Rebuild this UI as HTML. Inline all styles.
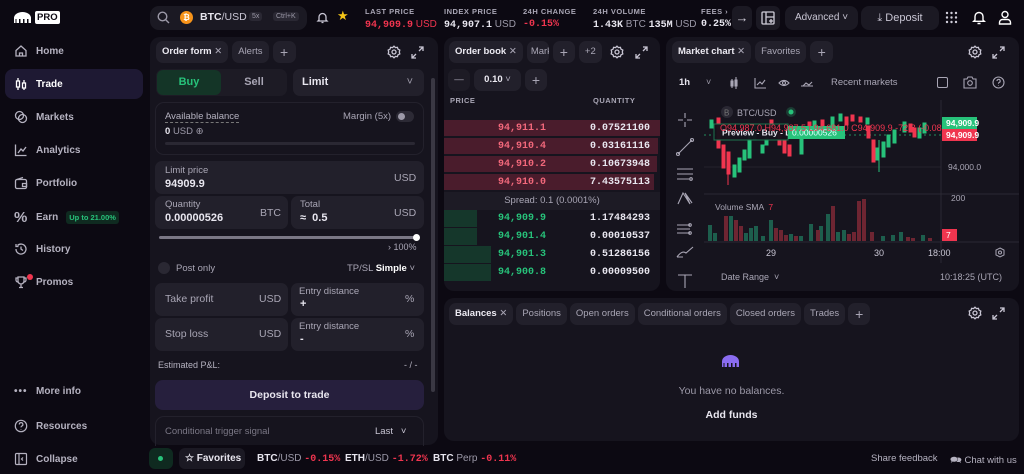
<!DOCTYPE html>
<html><head><meta charset="utf-8"><style>
*{box-sizing:border-box;margin:0;padding:0}
body{width:1024px;height:474px;background:#0c0912;font-family:"Liberation Sans",sans-serif;color:#e8e6ef;position:relative;overflow:hidden;font-size:11px}
.a{position:absolute}
.panel{position:absolute;background:#16141e;border-radius:10px}
.tabs{position:absolute;display:flex;gap:4px}
.tab{height:22px;background:#22202b;border-radius:7px;font-size:9.5px;color:#a9a6b5;line-height:22px;padding:0 6px;white-space:nowrap;text-align:center}
.tab b{color:#eceaf2}
.nav{position:absolute;left:14px;font-size:10px;color:#b5b2c0;font-weight:bold;display:flex;align-items:center;gap:8px}
.nav svg{width:14px;height:14px}
.lbl{font-size:7.5px;font-weight:bold;color:#a9a6b5;letter-spacing:.5px}
.mono{font-family:"Liberation Mono",monospace;font-weight:bold}
.box{position:absolute;background:#22202b;border-radius:7px}
.g{color:#9c99a8}
.ob{position:absolute;left:444px;width:216px;height:17px;font-family:"Liberation Mono",monospace;font-size:10px;font-weight:bold}
.ob span{position:absolute;top:3px}
</style></head><body>

<!-- sidebar -->
<div class="a" style="left:13px;top:11px;display:flex;align-items:center;gap:3px">
<svg width="19" height="13" viewBox="0 0 19 13"><path d="M1 12V7a8.5 6 0 0 1 17 0v5h-2.5V8h-1.5v4h-2.5V8H10v4H7.5V8H6v4H3.5V8H2.5v4z" fill="#fff"/></svg>
<span style="background:#fff;color:#0c0912;font-weight:bold;font-size:9.5px;padding:1px 2px;border-radius:2px">PRO</span></div>
<div class="a" style="left:5px;top:69px;width:138px;height:30px;background:#1e1933;border-radius:8px"></div>
<div class="nav" style="top:44px"><svg viewBox="0 0 14 14" fill="none" stroke="#b5b2c0" stroke-width="1.3"><path d="M2 6.5L7 2l5 4.5V12H2z"/><path d="M5.5 12V9h3v3"/></svg>Home</div>
<div class="nav" style="top:77px;color:#fff"><svg viewBox="0 0 14 14" fill="none" stroke="#fff" stroke-width="1.3"><rect x="2.5" y="4" width="3" height="6"/><rect x="8.5" y="6" width="3" height="5"/><path d="M4 1v3M4 10v3M10 3v3M10 11v2"/></svg>Trade</div>
<div class="nav" style="top:110px"><svg viewBox="0 0 14 14" fill="none" stroke="#b5b2c0" stroke-width="1.3"><circle cx="5.5" cy="5.5" r="4"/><circle cx="8.5" cy="8.5" r="4"/></svg>Markets</div>
<div class="nav" style="top:143px"><svg viewBox="0 0 14 14" fill="none" stroke="#b5b2c0" stroke-width="1.3"><path d="M1.5 1.5v11h11"/><path d="M4 10l3-4 2 2 3-4"/></svg>Analytics</div>
<div class="nav" style="top:176px"><svg viewBox="0 0 14 14" fill="none" stroke="#b5b2c0" stroke-width="1.3"><rect x="1.5" y="3.5" width="11" height="9" rx="1.5"/><path d="M3 3.5l6-2M8.5 7.5h4v3h-4z"/></svg>Portfolio</div>
<div class="nav" style="top:209px"><span style="font-size:15px;color:#b5b2c0;width:14px">%</span>Earn<span style="background:#0f2a20;color:#27c27a;font-size:7.5px;padding:2px 3px;border-radius:3px">Up to 21.00%</span></div>
<div class="nav" style="top:242px"><svg viewBox="0 0 14 14" fill="none" stroke="#b5b2c0" stroke-width="1.3"><path d="M2 7a5 5 0 1 0 1.5-3.5M2 2v2.5h2.5"/><path d="M7 4.5V7l2 1.5"/></svg>History</div>
<div class="nav" style="top:275px"><svg viewBox="0 0 14 14" fill="none" stroke="#b5b2c0" stroke-width="1.3"><path d="M4 2h6v4a3 3 0 0 1-6 0zM4 3H2v2a2 2 0 0 0 2 2M10 3h2v2a2 2 0 0 1-2 2M7 9v3M5 12.5h4"/></svg>Promos</div>
<div class="a" style="left:27px;top:274px;width:6px;height:6px;border-radius:50%;background:#f0354f"></div>
<div class="nav" style="top:386px"><span style="width:14px;letter-spacing:1px;color:#b5b2c0">•••</span>More info</div>
<div class="nav" style="top:419px"><svg viewBox="0 0 14 14" fill="none" stroke="#b5b2c0" stroke-width="1.2"><circle cx="7" cy="7" r="5.7"/><path d="M5.3 5.5a1.8 1.8 0 1 1 2.4 1.6c-.6.3-.7.7-.7 1.3M7 10v.5"/></svg>Resources</div>
<div class="nav" style="top:452px"><svg viewBox="0 0 14 14" fill="none" stroke="#b5b2c0" stroke-width="1.2"><rect x="1.5" y="1.5" width="11" height="11" rx="1"/><path d="M5 1.5v11M9 5.5L7.5 7 9 8.5"/></svg>Collapse</div>

<!-- top bar -->
<div class="a" style="left:150px;top:6px;width:157px;height:24px;background:#1b1923;border-radius:9px"></div>
<svg class="a" style="left:157px;top:11px" width="13" height="13" fill="none" stroke="#9c99a8" stroke-width="1.4"><circle cx="5.5" cy="5.5" r="4.3"/><path d="M8.7 8.7L12 12"/></svg>
<div class="a" style="left:180px;top:11px;width:13px;height:13px;border-radius:50%;background:#f7931a;color:#fff;font-size:8px;font-weight:bold;text-align:center;line-height:13px">₿</div>
<div class="a" style="left:200px;top:11px;font-size:10.5px;font-weight:bold">BTC<span style="color:#c9c6d4;font-weight:normal">/USD</span></div>
<div class="a" style="left:249px;top:12px;font-size:7px;background:#2a2833;color:#9c99a8;padding:1px 3px;border-radius:3px">5x</div>
<div class="a" style="left:273px;top:12px;font-size:7px;background:#2a2833;color:#9c99a8;padding:1px 3px;border-radius:3px">Ctrl+K</div>
<svg class="a" style="left:316px;top:11px" width="13" height="13" fill="none" stroke="#c9c6d4" stroke-width="1.3"><path d="M3 9V6a3.5 3.5 0 0 1 7 0v3l1 1H2zM5.5 11.5h2"/></svg>
<div class="a" style="left:337px;top:8px;color:#f5c518;font-size:13px">★</div>
<div class="a lbl" style="left:365px;top:7px">LAST PRICE</div>
<div class="a" style="left:365px;top:19px;font-size:10px;color:#f0354f"><span class="mono">94,909.9</span> USD</div>
<div class="a lbl" style="left:444px;top:7px">INDEX PRICE</div>
<div class="a" style="left:444px;top:19px;font-size:10px"><span class="mono">94,907.1</span> <span class="g">USD</span></div>
<div class="a lbl" style="left:523px;top:7px">24H CHANGE</div>
<div class="a mono" style="left:523px;top:19px;font-size:10px;color:#f0354f">-0.15%</div>
<div class="a lbl" style="left:593px;top:7px">24H VOLUME</div>
<div class="a" style="left:593px;top:19px;font-size:10px"><span class="mono">1.43K</span> <span class="g">BTC</span> <span class="mono">135M</span> <span class="g">USD</span></div>
<div class="a lbl" style="left:701px;top:7px">FEES ›</div>
<div class="a mono" style="left:701px;top:19px;font-size:10px">0.25%</div>
<div class="a" style="left:732px;top:6px;width:20px;height:24px;background:#1b1923;border-radius:6px;color:#d0cdd9;text-align:center;line-height:24px;font-size:13px">→</div>
<div class="a" style="left:756px;top:6px;width:24px;height:24px;background:#1b1923;border-radius:6px"></div>
<svg class="a" style="left:761px;top:11px" width="14" height="14" fill="none" stroke="#d0cdd9" stroke-width="1.3"><rect x="1" y="1" width="12" height="12" rx="1"/><path d="M5 1v12M5 6h8M10 8v4M8 10h4"/></svg>
<div class="a" style="left:785px;top:6px;width:73px;height:24px;background:#1b1923;border-radius:8px;color:#c9c6d4;font-size:10px;line-height:24px;text-align:center">Advanced ˅</div>
<div class="a" style="left:861px;top:6px;width:78px;height:24px;background:#1b1923;border-radius:8px;color:#c9c6d4;font-size:11px;line-height:24px;text-align:center">⤓ Deposit</div>
<svg class="a" style="left:945px;top:11px" width="13" height="13" fill="#d0cdd9"><circle cx="2" cy="2" r="1.2"/><circle cx="6.5" cy="2" r="1.2"/><circle cx="11" cy="2" r="1.2"/><circle cx="2" cy="6.5" r="1.2"/><circle cx="6.5" cy="6.5" r="1.2"/><circle cx="11" cy="6.5" r="1.2"/><circle cx="2" cy="11" r="1.2"/><circle cx="6.5" cy="11" r="1.2"/><circle cx="11" cy="11" r="1.2"/></svg>
<svg class="a" style="left:972px;top:10px" width="14" height="15" fill="none" stroke="#fff" stroke-width="1.4"><path d="M3 10V6.5a4 4 0 0 1 8 0V10l1.3 1.3H1.7zM5.5 13.5h3"/></svg>
<svg class="a" style="left:998px;top:10px" width="14" height="15" fill="none" stroke="#fff" stroke-width="1.4"><circle cx="7" cy="4.5" r="3"/><path d="M1.5 14v-1.5a3 3 0 0 1 3-3h5a3 3 0 0 1 3 3V14z"/></svg>

<!-- order form panel -->
<div class="panel" style="left:150px;top:37px;width:288px;height:408px"></div>
<div class="tabs" style="left:156px;top:41px"><div class="tab"><b>Order form</b> ✕</div><div class="tab">Alerts</div><div class="tab" style="width:23px;font-size:14px">+</div></div>
<svg class="a" style="left:387px;top:45px" width="14" height="14" fill="none" stroke="#c9c6d4" stroke-width="1.3"><circle cx="7" cy="7" r="2"/><path d="M7 1.2l1.4 1.4 2 -.3.6 1.9 1.8.9-.5 1.9.5 1.9-1.8.9-.6 1.9-2-.3L7 12.8l-1.4-1.4-2 .3-.6-1.9-1.8-.9.5-1.9-.5-1.9 1.8-.9.6-1.9 2 .3z"/></svg>
<svg class="a" style="left:411px;top:46px" width="13" height="13" fill="none" stroke="#c9c6d4" stroke-width="1.3"><path d="M8 1h4v4M12 1L8 5M5 12H1V8M1 12l4-4"/></svg>
<div class="box" style="left:156px;top:69px;width:131px;height:27px;background:#1d1b25"></div>
<div class="a" style="left:157px;top:70px;width:64px;height:25px;background:#143527;border-radius:6px;color:#27c27a;font-size:11px;font-weight:bold;text-align:center;line-height:25px">Buy</div>
<div class="a" style="left:223px;top:70px;width:62px;height:25px;color:#a9a6b5;font-size:11px;font-weight:bold;text-align:center;line-height:25px">Sell</div>
<div class="box" style="left:293px;top:69px;width:131px;height:27px;font-size:11px;font-weight:bold;line-height:27px;padding-left:9px">Limit<span class="g" style="position:absolute;right:11px;font-weight:normal">˅</span></div>
<div class="a" style="left:155px;top:102px;width:269px;height:53px;border:1px solid #23212c;border-radius:9px"></div>
<div class="a" style="left:165px;top:111px;font-size:9.5px;color:#b5b2c0;border-bottom:1px dashed #777">Available balance</div>
<div class="a" style="left:165px;top:126px;font-size:9.5px"><b>0</b> <span class="g">USD ⊕</span></div>
<div class="a" style="left:343px;top:111px;font-size:9.5px;color:#a9a6b5">Margin (5x)</div>
<div class="a" style="left:396px;top:111px;width:18px;height:11px;border-radius:6px;background:#2c2a35"><div style="margin:2px;width:7px;height:7px;border-radius:50%;background:#9c99a8"></div></div>
<div class="a" style="left:165px;top:142px;width:250px;height:3px;background:#2a2833;border-radius:2px"></div>
<div class="box" style="left:155px;top:161px;width:269px;height:33px"></div>
<div class="a" style="left:165px;top:165px;font-size:9.5px;color:#a9a6b5">Limit price</div>
<div class="a" style="left:165px;top:178px;font-size:11px;font-weight:bold">94909.9</div>
<div class="a" style="left:394px;top:172px;font-size:10.5px;color:#a9a6b5">USD</div>
<div class="box" style="left:155px;top:196px;width:133px;height:33px"></div>
<div class="box" style="left:291px;top:196px;width:133px;height:33px"></div>
<div class="a" style="left:165px;top:199px;font-size:9.5px;color:#a9a6b5">Quantity</div>
<div class="a" style="left:165px;top:212px;font-size:11px;font-weight:bold">0.00000526</div>
<div class="a" style="left:260px;top:207px;font-size:10.5px;color:#a9a6b5">BTC</div>
<div class="a" style="left:300px;top:199px;font-size:9.5px;color:#a9a6b5">Total</div>
<div class="a" style="left:300px;top:212px;font-size:11px;font-weight:bold">≈&nbsp; 0.5</div>
<div class="a" style="left:394px;top:207px;font-size:10.5px;color:#a9a6b5">USD</div>
<div class="a" style="left:159px;top:236px;width:258px;height:3px;background:#7a7785;border-radius:2px"></div>
<div class="a" style="left:413px;top:234px;width:7px;height:7px;border-radius:50%;background:#fff"></div>
<div class="a" style="left:388px;top:242px;font-size:9px;color:#a9a6b5">› 100%</div>
<div class="a" style="left:158px;top:262px;width:12px;height:12px;border-radius:50%;background:#2a2833"></div>
<div class="a" style="left:176px;top:263px;font-size:9.5px;color:#a9a6b5">Post only</div>
<div class="a" style="left:347px;top:263px;font-size:9.5px;color:#a9a6b5">TP/SL <b style="color:#fff">Simple</b> ˅</div>
<div class="box" style="left:155px;top:283px;width:133px;height:33px"></div>
<div class="box" style="left:291px;top:283px;width:133px;height:33px"></div>
<div class="box" style="left:155px;top:318px;width:133px;height:33px"></div>
<div class="box" style="left:291px;top:318px;width:133px;height:33px"></div>
<div class="a" style="left:165px;top:293px;font-size:10.5px;color:#a9a6b5">Take profit</div>
<div class="a" style="left:259px;top:293px;font-size:10.5px;color:#a9a6b5">USD</div>
<div class="a" style="left:299px;top:286px;font-size:9.5px;color:#a9a6b5">Entry distance</div>
<div class="a" style="left:300px;top:298px;font-size:11px;font-weight:bold">+</div>
<div class="a" style="left:405px;top:293px;font-size:10.5px;color:#a9a6b5">%</div>
<div class="a" style="left:165px;top:328px;font-size:10.5px;color:#a9a6b5">Stop loss</div>
<div class="a" style="left:259px;top:328px;font-size:10.5px;color:#a9a6b5">USD</div>
<div class="a" style="left:299px;top:321px;font-size:9.5px;color:#a9a6b5">Entry distance</div>
<div class="a" style="left:300px;top:333px;font-size:11px;font-weight:bold">-</div>
<div class="a" style="left:405px;top:328px;font-size:10.5px;color:#a9a6b5">%</div>
<div class="a" style="left:158px;top:360px;font-size:9px;color:#b5b2c0">Estimated P&amp;L:</div>
<div class="a" style="left:404px;top:360px;font-size:9px;color:#b5b2c0">- / -</div>
<div class="a" style="left:155px;top:380px;width:269px;height:30px;background:#261f3d;border-radius:8px;text-align:center;line-height:30px;font-size:10.5px;font-weight:bold">Deposit to trade</div>
<div class="a" style="left:155px;top:416px;width:269px;height:30px;border:1px solid #23212c;border-bottom:none;border-radius:9px 9px 0 0"></div>
<div class="a" style="left:165px;top:426px;font-size:9.5px;color:#7a7785">Conditional trigger signal</div>
<div class="a" style="left:375px;top:426px;font-size:9.5px;color:#c9c6d4">Last&nbsp;&nbsp; ˅</div>
<div class="a" style="left:431px;top:78px;width:4px;height:314px;background:#3a3843;border-radius:2px"></div>

<!-- order book -->
<div class="panel" style="left:444px;top:37px;width:216px;height:254px"></div>
<div class="tabs" style="left:449px;top:41px"><div class="tab"><b>Order book</b> ✕</div><div class="tab" style="width:22px;overflow:hidden;padding:0 0 0 4px;text-align:left">Mark</div><div class="tab" style="width:22px;font-size:14px">+</div><div class="tab" style="width:23px">+2</div></div>
<svg class="a" style="left:610px;top:45px" width="14" height="14" fill="none" stroke="#c9c6d4" stroke-width="1.3"><circle cx="7" cy="7" r="2"/><path d="M7 1.2l1.4 1.4 2 -.3.6 1.9 1.8.9-.5 1.9.5 1.9-1.8.9-.6 1.9-2-.3L7 12.8l-1.4-1.4-2 .3-.6-1.9-1.8-.9.5-1.9-.5-1.9 1.8-.9.6-1.9 2 .3z"/></svg>
<svg class="a" style="left:635px;top:46px" width="13" height="13" fill="none" stroke="#c9c6d4" stroke-width="1.3"><path d="M8 1h4v4M12 1L8 5M5 12H1V8M1 12l4-4"/></svg>
<div class="tabs" style="left:448px;top:69px"><div class="tab" style="width:22px;background:#1d1b25">—</div><div class="tab" style="width:47px"><b>0.10</b> ˅</div><div class="tab" style="width:22px;font-size:14px">+</div></div>
<div class="a lbl" style="left:450px;top:96px">PRICE</div>
<div class="a lbl" style="left:593px;top:96px">QUANTITY</div>
<div class="a" style="left:444px;top:120px;width:216px;height:16px;background:#4a1c2c"></div>
<div class="a" style="left:444px;top:138px;width:214px;height:16px;background:#4a1c2c"></div>
<div class="a" style="left:444px;top:156px;width:213px;height:16px;background:#4a1c2c"></div>
<div class="a" style="left:444px;top:174px;width:210px;height:16px;background:#4a1c2c"></div>
<div class="a" style="left:444px;top:192px;width:216px;height:18px;background:#1d1b25;font-size:9.5px;color:#a9a6b5;text-align:center;line-height:18px">Spread: 0.1 (0.0001%)</div>
<div class="a" style="left:444px;top:210px;width:33px;height:17px;background:#15372b"></div>
<div class="a" style="left:444px;top:228px;width:33px;height:17px;background:#15372b"></div>
<div class="a" style="left:444px;top:246px;width:47px;height:17px;background:#15372b"></div>
<div class="a" style="left:444px;top:264px;width:47px;height:17px;background:#15372b"></div>
<div class="ob" style="top:120px"><span style="left:54px;color:#f2687b">94,911.1</span><span style="left:146px">0.07521100</span></div>
<div class="ob" style="top:138px"><span style="left:54px;color:#f2687b">94,910.4</span><span style="left:146px">0.03161116</span></div>
<div class="ob" style="top:156px"><span style="left:54px;color:#f2687b">94,910.2</span><span style="left:146px">0.10673948</span></div>
<div class="ob" style="top:174px"><span style="left:54px;color:#f2687b">94,910.0</span><span style="left:146px">7.43575113</span></div>
<div class="ob" style="top:210px"><span style="left:54px;color:#27c27a">94,909.9</span><span style="left:146px">1.17484293</span></div>
<div class="ob" style="top:228px"><span style="left:54px;color:#27c27a">94,901.4</span><span style="left:146px">0.00010537</span></div>
<div class="ob" style="top:246px"><span style="left:54px;color:#27c27a">94,901.3</span><span style="left:146px">0.51286156</span></div>
<div class="ob" style="top:264px"><span style="left:54px;color:#27c27a">94,900.8</span><span style="left:146px">0.00009500</span></div>

<!-- chart -->
<div class="panel" style="left:666px;top:37px;width:353px;height:254px"></div>
<div class="tabs" style="left:672px;top:41px"><div class="tab"><b>Market chart</b> ✕</div><div class="tab">Favorites</div><div class="tab" style="width:23px;font-size:14px">+</div></div>
<svg class="a" style="left:968px;top:45px" width="14" height="14" fill="none" stroke="#c9c6d4" stroke-width="1.3"><circle cx="7" cy="7" r="2"/><path d="M7 1.2l1.4 1.4 2 -.3.6 1.9 1.8.9-.5 1.9.5 1.9-1.8.9-.6 1.9-2-.3L7 12.8l-1.4-1.4-2 .3-.6-1.9-1.8-.9.5-1.9-.5-1.9 1.8-.9.6-1.9 2 .3z"/></svg>
<svg class="a" style="left:992px;top:46px" width="13" height="13" fill="none" stroke="#c9c6d4" stroke-width="1.3"><path d="M8 1h4v4M12 1L8 5M5 12H1V8M1 12l4-4"/></svg>
<div class="a" style="left:679px;top:77px;font-size:9.5px;font-weight:bold">1h</div>
<div class="a g" style="left:706px;top:77px;font-size:9px">˅</div>
<svg class="a" style="left:730px;top:76px;" width="100" height="14" fill="none" stroke="#a9a6b5" stroke-width="1.1"><path d="M2 3v9M6 1v12M1 5h2v5H1zM5 4h2v6H5z"/><path d="M25 2v10h11M27 9l3-3 2 2 3-4"/><path d="M49 7q5-5 10 0q-5 5-10 0z"/><circle cx="54" cy="7" r="1.5"/><path d="M71 10h12M73 10l3-3 3 2 3-3"/></svg>
<div class="a" style="left:831px;top:77px;font-size:9.5px;color:#a9a6b5">Recent markets</div>
<div class="a" style="left:937px;top:77px;width:11px;height:11px;border:1px solid #a9a6b5;border-radius:2px"></div>
<svg class="a" style="left:963px;top:76px" width="14" height="13" fill="none" stroke="#a9a6b5" stroke-width="1.1"><path d="M1 3h3l1-2h4l1 2h3v9H1z"/><circle cx="7" cy="7" r="2.3"/></svg>
<svg class="a" style="left:992px;top:76px" width="13" height="13" fill="none" stroke="#a9a6b5" stroke-width="1.1"><circle cx="6.5" cy="6.5" r="5.5"/><path d="M5 5a1.6 1.6 0 1 1 2 1.5c-.5.2-.5.6-.5 1.2M6.5 9.5v.5"/></svg>
<svg class="a" style="left:666px;top:100px" width="353" height="191">
<g fill="none" stroke="#a9a6b5" stroke-width="1.1">
<path d="M19 13v5M19 22v5M12 20h5M21 20h5"/>
<path d="M12 54l14-14"/><circle cx="12" cy="54" r="1.5"/><circle cx="26" cy="40" r="1.5"/>
<path d="M11 69h16M11 74h16M11 79h12"/><circle cx="25" cy="79" r="1.3"/>
<path d="M12 104l5-11 7 11-5-11 7 10"/>
<path d="M11 125h13M11 129h13M11 133h13"/><circle cx="24" cy="125" r="1.3"/><circle cx="24" cy="133" r="1.3"/>
<path d="M11 157q5-7 9-4l7-6M11 157l6 0"/>
<path d="M12 175h14M19 175v13"/>
</g>
<line x1="38" y1="67" x2="275" y2="67" stroke="#24222c"/>
<line x1="38" y1="94" x2="353" y2="94" stroke="#2b2934"/>
<line x1="275" y1="0" x2="275" y2="163" stroke="#2b2934"/>
<line x1="38" y1="142" x2="353" y2="142" stroke="#2b2934"/>
<line x1="38" y1="35" x2="275" y2="35" stroke="#27c27a" stroke-dasharray="2 3" opacity=".7"/>
<g stroke-width="1">
<g fill="#27c27a" stroke="#27c27a"><rect x="44" y="20" width="3" height="8"/><rect x="67" y="65" width="3" height="12"/><rect x="72" y="58" width="3" height="14"/><rect x="77" y="50" width="3" height="10"/><rect x="82" y="35" width="3" height="23"/><rect x="87" y="25" width="3" height="15"/><rect x="95" y="45" width="3" height="8"/><rect x="99" y="38" width="3" height="7"/><rect x="134" y="37" width="3" height="17"/><rect x="147" y="21" width="3" height="15"/><rect x="165" y="17" width="3" height="12"/><rect x="173" y="14" width="3" height="7"/><rect x="200" y="18" width="3" height="6"/><rect x="210" y="48" width="3" height="12"/><rect x="216" y="42" width="3" height="15"/><rect x="221" y="35" width="3" height="12"/><rect x="227" y="30" width="3" height="13"/><rect x="237" y="22" width="3" height="10"/><rect x="252" y="28" width="3" height="10"/><rect x="257" y="23" width="3" height="10"/><line x1="213" y1="40" x2="213" y2="72"/></g>
<g fill="#f0354f" stroke="#f0354f"><rect x="51" y="18" width="3" height="30"/><rect x="56" y="45" width="3" height="23"/><rect x="61" y="52" width="3" height="22"/><rect x="104" y="20" width="3" height="10"/><rect x="112" y="25" width="3" height="20"/><rect x="117" y="40" width="3" height="13"/><rect x="122" y="45" width="3" height="11"/><rect x="142" y="22" width="3" height="8"/><rect x="155" y="20" width="3" height="10"/><rect x="179" y="17" width="3" height="8"/><rect x="185" y="15" width="3" height="6"/><rect x="193" y="17" width="3" height="5"/><rect x="201" y="26" width="3" height="12"/><rect x="206" y="40" width="3" height="22"/><rect x="243" y="24" width="3" height="8"/><rect x="247" y="28" width="3" height="9"/><line x1="62" y1="52" x2="62" y2="85"/></g>
</g>
<rect x="48" y="24" width="74" height="16" fill="#14121b" stroke="#1f7a52" opacity=".95"/>
<text x="56" y="35.5" font-size="8.5" font-weight="bold" fill="#e8e6ef" font-family="Liberation Sans">Preview - Buy - Limit</text>
<rect x="122" y="26" width="57" height="13" fill="#27c27a"/>
<text x="126" y="35.5" font-size="8.5" fill="#dff" font-family="Liberation Sans">0.00000526</text>
<circle cx="61" cy="12" r="6" fill="#2a2833"/><text x="58" y="15.5" font-size="8" fill="#777" font-family="Liberation Sans">B</text>
<text x="71" y="16" font-size="9" fill="#a9a6b5" font-family="Liberation Sans">BTC/USD</text>
<circle cx="125" cy="12" r="5" fill="#1b3b33"/><circle cx="125" cy="12" r="2.5" fill="#27c27a"/>
<text x="54" y="31" font-size="9" fill="#f0354f" font-family="Liberation Sans">O94,987.0 H94,987.5 L94,681.0 C94,909.9 -72.8 (-0.08%)</text>
<rect x="276" y="17" width="35" height="12" fill="#27c27a"/><text x="280" y="26" font-size="8.5" font-weight="bold" fill="#fff" font-family="Liberation Sans">94,909.9</text>
<rect x="276" y="29" width="35" height="12" fill="#f0354f"/><text x="280" y="38" font-size="8.5" font-weight="bold" fill="#fff" font-family="Liberation Sans">94,909.9</text>
<text x="282" y="70" font-size="8.5" fill="#a9a6b5" font-family="Liberation Sans">94,000.0</text>
<text x="285" y="101" font-size="8.5" fill="#a9a6b5" font-family="Liberation Sans">200</text>
<text x="49" y="110" font-size="8.5" fill="#a9a6b5" font-family="Liberation Sans">Volume SMA <tspan fill="#f0354f">&#160;7</tspan></text>
<rect x="276" y="129" width="15" height="12" fill="#f0354f"/><text x="280" y="138" font-size="8.5" fill="#fff" font-family="Liberation Sans">7</text>
<g fill="#1d5e4d"><rect x="42" y="125" width="4" height="16"/><rect x="47" y="133" width="4" height="8"/><rect x="63" y="116" width="4" height="25"/><rect x="78" y="133" width="4" height="8"/><rect x="83" y="128" width="4" height="13"/><rect x="88" y="126" width="4" height="15"/><rect x="95" y="136" width="4" height="5"/><rect x="103" y="120" width="4" height="21"/><rect x="123" y="134" width="4" height="7"/><rect x="133" y="136" width="4" height="5"/><rect x="143" y="124" width="4" height="17"/><rect x="153" y="126" width="4" height="15"/><rect x="160" y="114" width="4" height="27"/><rect x="170" y="132" width="4" height="9"/><rect x="176" y="130" width="4" height="11"/><rect x="215" y="136" width="4" height="5"/><rect x="225" y="135" width="4" height="6"/><rect x="233" y="132" width="4" height="9"/><rect x="255" y="135" width="4" height="6"/></g>
<g fill="#6e2532"><rect x="58" y="116" width="4" height="25"/><rect x="68" y="120" width="4" height="21"/><rect x="73" y="126" width="4" height="15"/><rect x="108" y="128" width="4" height="13"/><rect x="113" y="130" width="4" height="11"/><rect x="118" y="135" width="4" height="6"/><rect x="128" y="136" width="4" height="5"/><rect x="150" y="130" width="4" height="11"/><rect x="165" y="106" width="4" height="35"/><rect x="181" y="134" width="4" height="7"/><rect x="186" y="132" width="4" height="9"/><rect x="191" y="101" width="4" height="40"/><rect x="196" y="99" width="4" height="42"/><rect x="204" y="132" width="4" height="9"/><rect x="240" y="137" width="4" height="4"/><rect x="245" y="138" width="4" height="3"/><rect x="262" y="138" width="4" height="3"/></g>
<text x="100" y="156" font-size="9" fill="#c9c6d4" font-family="Liberation Sans">29</text>
<text x="208" y="156" font-size="9" fill="#c9c6d4" font-family="Liberation Sans">30</text>
<text x="262" y="156" font-size="9" fill="#c9c6d4" font-family="Liberation Sans">18:00</text>
<path d="M334 148l4 2v5l-4 2-4-2v-5z" fill="none" stroke="#a9a6b5"/><circle cx="334" cy="152.5" r="1.5" fill="none" stroke="#a9a6b5"/>
<text x="55" y="180" font-size="9" fill="#a9a6b5" font-family="Liberation Sans">Date Range&#160; ˅</text>
<text x="274" y="180" font-size="9" fill="#a9a6b5" font-family="Liberation Sans">10:18:25 (UTC)</text>
</svg>

<!-- balances -->
<div class="panel" style="left:444px;top:298px;width:575px;height:143px"></div>
<div class="tabs" style="left:449px;top:303px;gap:3px"><div class="tab"><b>Balances</b> ✕</div><div class="tab">Positions</div><div class="tab">Open orders</div><div class="tab">Conditional orders</div><div class="tab">Closed orders</div><div class="tab">Trades</div><div class="tab" style="width:22px;font-size:14px">+</div></div>
<svg class="a" style="left:968px;top:306px" width="14" height="14" fill="none" stroke="#c9c6d4" stroke-width="1.3"><circle cx="7" cy="7" r="2"/><path d="M7 1.2l1.4 1.4 2 -.3.6 1.9 1.8.9-.5 1.9.5 1.9-1.8.9-.6 1.9-2-.3L7 12.8l-1.4-1.4-2 .3-.6-1.9-1.8-.9.5-1.9-.5-1.9 1.8-.9.6-1.9 2 .3z"/></svg>
<svg class="a" style="left:992px;top:307px" width="13" height="13" fill="none" stroke="#c9c6d4" stroke-width="1.3"><path d="M8 1h4v4M12 1L8 5M5 12H1V8M1 12l4-4"/></svg>
<svg class="a" style="left:721px;top:354px" width="19" height="14"><path d="M1 13V7.5a8.5 6.5 0 0 1 17 0V13h-2.5V9h-1.5v4h-2.5V9H10v4H7.5V9H6v4H3.5V9H2.5v4z" fill="#8a6cf0"/></svg>
<div class="a" style="left:644px;top:385px;width:175px;text-align:center;font-size:10.5px;color:#9c99a8">You have no balances.</div>
<div class="a" style="left:644px;top:409px;width:175px;text-align:center;font-size:10.5px;font-weight:bold">Add funds</div>

<!-- bottom bar -->
<div class="a" style="left:149px;top:448px;width:24px;height:21px;background:#0f2a20;border-radius:6px"><div style="margin:8px 0 0 9px;width:5px;height:5px;border-radius:50%;background:#27c27a"></div></div>
<div class="a" style="left:179px;top:448px;width:66px;height:21px;background:#1b1923;border-radius:6px;font-size:10px;font-weight:bold;line-height:21px;padding-left:6px">☆ Favorites</div>
<div class="a" style="left:257px;top:453px;font-size:10px"><b>BTC</b><span class="g">/USD</span> <span class="mono" style="color:#f0354f">-0.15%</span></div>
<div class="a" style="left:345px;top:453px;font-size:10px"><b>ETH</b><span class="g">/USD</span> <span class="mono" style="color:#f0354f">-1.72%</span></div>
<div class="a" style="left:433px;top:453px;font-size:10px"><b>BTC</b> <span class="g">Perp</span> <span class="mono" style="color:#f0354f">-0.11%</span></div>
<div class="a" style="left:871px;top:453px;font-size:9.5px;color:#b5b2c0">Share feedback</div>
<div class="a" style="left:950px;top:453px;font-size:9.5px;color:#b5b2c0">🗪 Chat with us</div>
</body></html>
